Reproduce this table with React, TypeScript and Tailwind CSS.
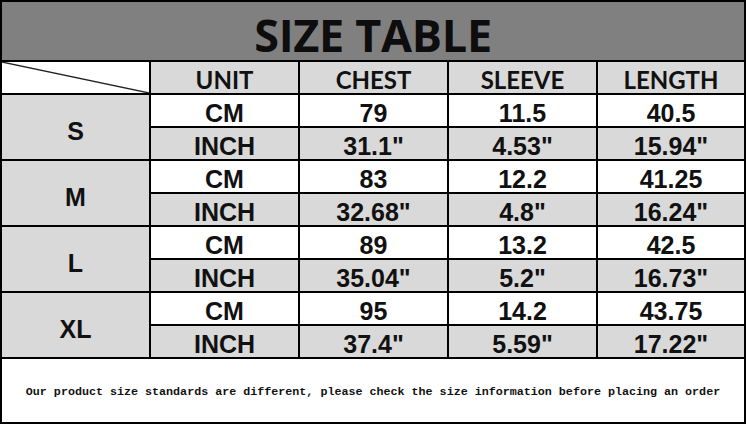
import React from "react";

const rows = [
  { size: "S", cm: ["79", "11.5", "40.5"], inch: ['31.1"', '4.53"', '15.94"'] },
  { size: "M", cm: ["83", "12.2", "41.25"], inch: ['32.68"', '4.8"', '16.24"'] },
  { size: "L", cm: ["89", "13.2", "42.5"], inch: ['35.04"', '5.2"', '16.73"'] },
  { size: "XL", cm: ["95", "14.2", "43.75"], inch: ['37.4"', '5.59"', '17.22"'] },
];

const dataFont = "font-['Liberation_Sans',Arial,sans-serif] font-bold text-[25px] leading-none text-[#111]";

function Cell({ children, gray }: { children: React.ReactNode; gray?: boolean }) {
  return (
    <div className={`flex items-center justify-center pt-[6px] ${gray ? "bg-[#d9d9d9]" : "bg-white"} ${dataFont}`}>
      {children}
    </div>
  );
}

export default function App() {
  return (
    <div className="w-[746px] h-[424px] bg-black p-[2px]">
      <div className="grid h-full w-full gap-[2px] grid-cols-[147px_147px_147px_147px_146px] grid-rows-[58px_31px_31px_31px_31px_31px_31px_31px_31px_31px_63px]">
        <div className="col-span-5 bg-[#808080] flex items-center justify-center pt-[6px]">
          <span className="font-['Open_Sans',sans-serif] font-bold text-[45px] leading-none text-[#0d0d0d] tracking-[-0.3px]">
            SIZE TABLE
          </span>
        </div>
        <div className="bg-white relative">
          <svg className="absolute inset-0" width="147" height="31" viewBox="0 0 147 31">
            <line x1="0" y1="0" x2="147" y2="31" stroke="#222" strokeWidth="1.3" />
          </svg>
        </div>
        {["UNIT", "CHEST", "SLEEVE", "LENGTH"].map((h) => (
          <div
            key={h}
            className="bg-[#d9d9d9] flex items-center justify-center pt-[4px] font-['Lato',sans-serif] font-bold text-[24px] leading-none text-[#111]"
          >
            {h}
          </div>
        ))}
        {rows.map((r) => (
          <React.Fragment key={r.size}>
            <div className={`row-span-2 bg-[#d9d9d9] flex items-center justify-center pt-[8px] ${dataFont} text-[24px]`}>
              {r.size}
            </div>
            <Cell>CM</Cell>
            {r.cm.map((v, i) => (
              <Cell key={"c" + i}>{v}</Cell>
            ))}
            <Cell gray>INCH</Cell>
            {r.inch.map((v, i) => (
              <Cell gray key={"i" + i}>{v}</Cell>
            ))}
          </React.Fragment>
        ))}
        <div className="col-span-5 bg-white flex items-center justify-center pt-[5px]">
          <span className="font-['Liberation_Mono','Courier_New',monospace] font-bold text-[11.7px] leading-none text-[#111] whitespace-nowrap">
            Our product size standards are different, please check the size information before placing an order
          </span>
        </div>
      </div>
    </div>
  );
}
